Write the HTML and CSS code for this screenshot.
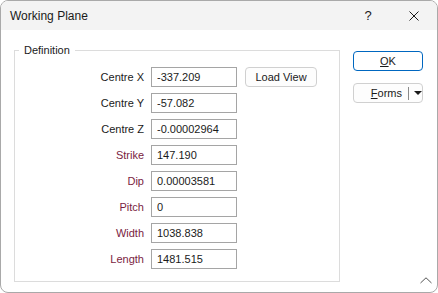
FILE: index.html
```html
<!DOCTYPE html>
<html lang="en">
<head>
  <meta charset="UTF-8">
  <title>Working Plane</title>
  <link rel="stylesheet" href="styles.css">
</head>
<body>
  <div class="window">
    <div class="titlebar">
      <span class="title">Working Plane</span>
      <span class="tb-btn">?</span>
      <span class="tb-btn">
        <svg width="10" height="10" viewBox="0 0 10 10"><path d="M0.5 0.5L9.5 9.5M9.5 0.5L0.5 9.5" stroke="#1a1a1a" stroke-width="1" fill="none"/></svg>
      </span>
    </div>

    <div class="content">
      <fieldset class="group">
        <legend>Definition</legend>
        <div class="form">
          <label class="lbl">Centre X</label>
          <input class="field" value="-337.209">
          <button class="btn load">Load View</button>

          <label class="lbl">Centre Y</label>
          <input class="field" value="-57.082">
          <span></span>

          <label class="lbl">Centre Z</label>
          <input class="field" value="-0.00002964">
          <span></span>

          <label class="lbl opt">Strike</label>
          <input class="field" value="147.190">
          <span></span>

          <label class="lbl opt">Dip</label>
          <input class="field" value="0.00003581">
          <span></span>

          <label class="lbl opt">Pitch</label>
          <input class="field" value="0">
          <span></span>

          <label class="lbl opt">Width</label>
          <input class="field" value="1038.838">
          <span></span>

          <label class="lbl opt">Length</label>
          <input class="field" value="1481.515">
          <span></span>
        </div>
      </fieldset>

      <div class="actions">
        <button class="btn ok"><u>O</u>K</button>
        <div class="btn split">
          <span class="split-text"><u>F</u>orms</span>
          <span class="split-sep"></span>
          <span class="split-arrow"></span>
        </div>
      </div>
    </div>

    <!-- collapse chevron, bottom right -->
    <svg class="grip" width="12" height="7" viewBox="0 0 12 7"><path d="M0.5 6L6 0.8L11.5 6" stroke="#555" stroke-width="1" fill="none"/></svg>
  </div>
</body>
</html>
```

FILE: styles.css
```css
html, body {
    margin: 0;
    background: #ffffff;
}
body {
    font-family: "Liberation Sans", Arial, sans-serif;
    font-size: 11px;
    color: #000;
}
.window {
    position: relative;
    box-sizing: border-box;
    width: 438px;
    height: 293px;
    border: 1px solid #a9a9a9;
    border-radius: 8px;
    background: #fff;
    overflow: hidden;
}
.titlebar {
    display: flex;
    align-items: center;
    height: 29px;
    background: #f3f3f3;
}
.title {
    flex: 1;
    padding-left: 9px;
    font-size: 12px;
    color: #1a1a1a;
}
.tb-btn {
    display: flex;
    align-items: center;
    justify-content: center;
    width: 46px;
    height: 29px;
    font-size: 13px;
    color: #1a1a1a;
}
.content {
    display: flex;
    gap: 13px;
    padding: 0 13px;
}
.group {
    box-sizing: border-box;
    width: 326px;
    height: 239px;
    margin: 13px 0 0 0;
    padding: 0;
    border: 1px solid #dcdcdc;
}
.group legend {
    margin-left: 4px;
    padding: 0 5px;
    line-height: 14px;
    color: #1a1a1a;
}
.form {
    display: grid;
    grid-template-columns: 129px 86px 72px;
    grid-auto-rows: 20px;
    column-gap: 7px;
    row-gap: 6px;
    padding-top: 10px;
}
.lbl {
    display: flex;
    align-items: center;
    justify-content: flex-end;
    font-weight: normal;
    color: #1a1a1a;
}
.lbl.opt {
    color: #7a1d3f;
}
.field {
    box-sizing: border-box;
    width: 86px;
    height: 20px;
    margin: 0;
    padding: 0 5px;
    border: 1px solid #a5a5a5;
    font-family: inherit;
    font-size: 11px;
    color: #1a1a1a;
    outline: none;
}
.btn {
    box-sizing: border-box;
    height: 20px;
    margin: 0;
    padding: 0;
    border: 1px solid #d0d0d0;
    border-radius: 4px;
    background: #fdfdfd;
    font-family: inherit;
    font-size: 11px;
    color: #1a1a1a;
}
.load {
    margin-left: 1px;
    width: 72px;
}
.actions {
    display: flex;
    flex-direction: column;
    gap: 12px;
    padding-top: 21px;
}
.ok {
    width: 70px;
    border-color: #0067c0;
    background: #fff;
}
.split {
    display: flex;
    align-items: center;
    width: 70px;
}
.split-text {
    width: 48px;
    text-align: right;
    padding-right: 6px;
}
.split-sep {
    width: 1px;
    height: 13px;
    background: #8a8a8a;
}
.split-arrow {
    width: 0;
    height: 0;
    margin-left: 5px;
    border-left: 4px solid transparent;
    border-right: 4px solid transparent;
    border-top: 4px solid #1a1a1a;
}
.grip {
    position: absolute;
    right: 5px;
    bottom: 8px;
}
```
